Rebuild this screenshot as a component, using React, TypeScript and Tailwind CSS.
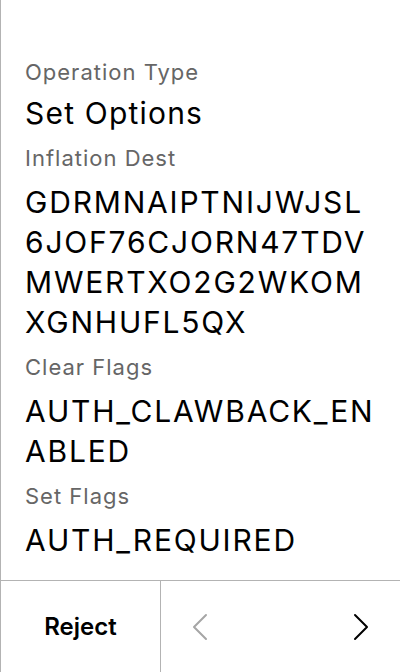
import { ReactNode } from "react";

const rows: { label: string; value: string }[] = [
  { label: "Inflation Dest", value: "GDRMNAIPTNIJWJSL6JOF76CJORN47TDVMWERTXO2G2WKOMXGNHUFL5QX" },
  { label: "Clear Flags", value: "AUTH_CLAWBACK_ENABLED" },
  { label: "Set Flags", value: "AUTH_REQUIRED" },
];

function Label({ children }: { children: ReactNode }) {
  return (
    <div className="text-[22px] leading-[28px] tracking-[1px] text-[#666666]">{children}</div>
  );
}

function Value({ children }: { children: ReactNode }) {
  return (
    <div className="mt-[10px] text-[30px] leading-[40px] tracking-[1.8px] text-black break-all">
      {children}
    </div>
  );
}

export default function App() {
  return (
    <div
      className="w-[400px] h-[672px] flex flex-col bg-white border-l border-[#b3b3b3]"
      style={{ fontFamily: "Inter, 'Noto Sans', sans-serif" }}
    >
      <div className="flex-1 flex flex-col gap-[11px] pl-6 pr-[22px] pt-[58px]">
        <div>
          <Label>Operation Type</Label>
          <div className="mt-[7px] text-[30px] leading-[40px] tracking-[1.2px] text-black">
            Set Options
          </div>
        </div>
        {rows.map((r) => (
          <div key={r.label}>
            <Label>{r.label}</Label>
            <Value>{r.value}</Value>
          </div>
        ))}
      </div>

      {/* Footer */}
      <div className="h-[92px] flex border-t border-[#b3b3b3]">
        <button className="w-[160px] shrink-0 border-r border-[#b3b3b3] flex items-center justify-center text-[24px] font-semibold text-black">
          Reject
        </button>
        <div className="flex-1 flex items-center justify-between px-[31px]">
          <button>
            <svg width="16" height="28" viewBox="0 0 16 28" fill="none">
              <path d="M14 2 L2 14 L14 26" stroke="#a6a6a6" strokeWidth="2" strokeLinecap="round" strokeLinejoin="round" />
            </svg>
          </button>
          <button>
            <svg width="16" height="28" viewBox="0 0 16 28" fill="none">
              <path d="M2 2 L14 14 L2 26" stroke="#000000" strokeWidth="2" strokeLinecap="round" strokeLinejoin="round" />
            </svg>
          </button>
        </div>
      </div>
    </div>
  );
}
